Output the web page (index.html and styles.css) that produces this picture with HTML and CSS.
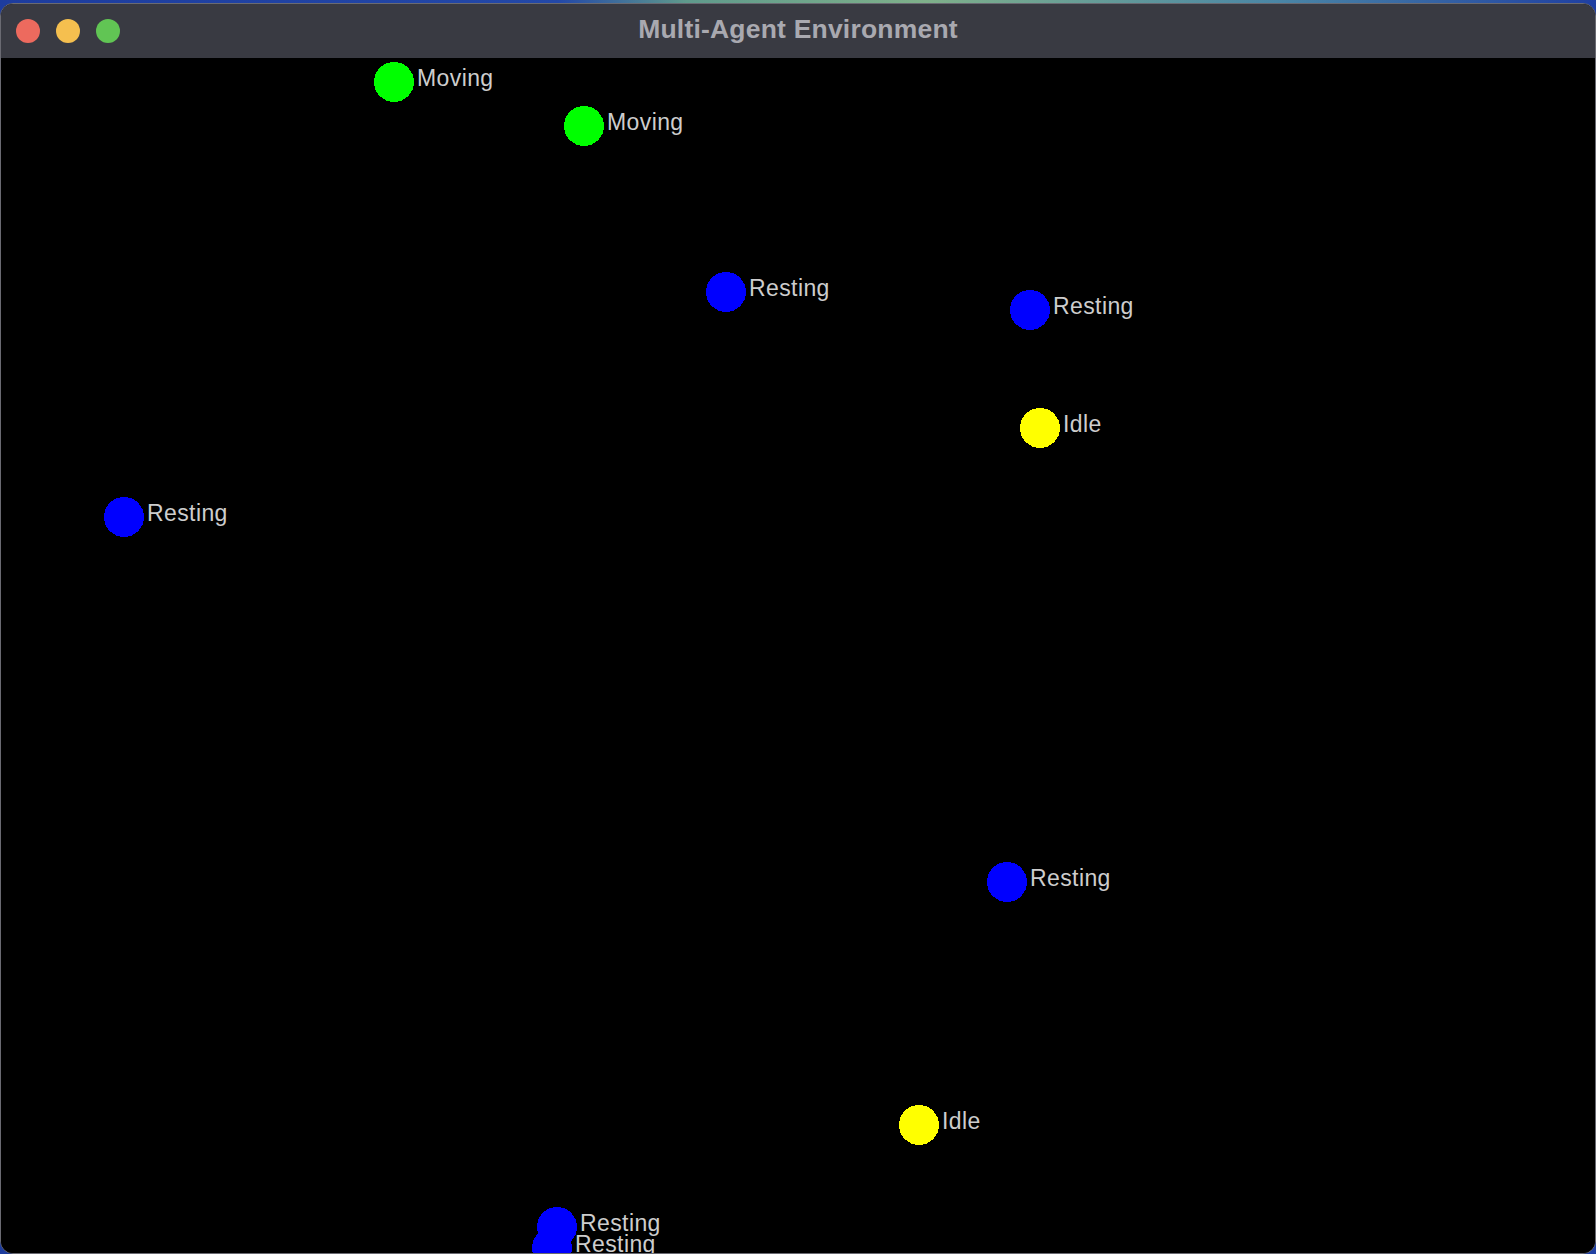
FILE: index.html
```html
<!DOCTYPE html>
<html lang="en">
<head>
<meta charset="utf-8">
<title>Multi-Agent Environment</title>
<link rel="stylesheet" href="styles.css">
</head>
<body>
<div class="window">
  <header class="titlebar">
    <div class="lights">
      <span class="light red"></span>
      <span class="light yellow"></span>
      <span class="light green"></span>
    </div>
    <div class="title">Multi-Agent Environment</div>
    <div></div>
  </header>
  <main class="canvas">
    <div class="agent moving" style="left:373px;top:4px"><svg class="dot" viewBox="0 0 40 40" shape-rendering="crispEdges"><circle cx="20" cy="20" r="20"/></svg><span class="label">Moving</span></div>
    <div class="agent moving" style="left:563px;top:48px"><svg class="dot" viewBox="0 0 40 40" shape-rendering="crispEdges"><circle cx="20" cy="20" r="20"/></svg><span class="label">Moving</span></div>
    <div class="agent resting" style="left:705px;top:214px"><svg class="dot" viewBox="0 0 40 40" shape-rendering="crispEdges"><circle cx="20" cy="20" r="20"/></svg><span class="label">Resting</span></div>
    <div class="agent resting" style="left:1009px;top:232px"><svg class="dot" viewBox="0 0 40 40" shape-rendering="crispEdges"><circle cx="20" cy="20" r="20"/></svg><span class="label">Resting</span></div>
    <div class="agent idle" style="left:1019px;top:350px"><svg class="dot" viewBox="0 0 40 40" shape-rendering="crispEdges"><circle cx="20" cy="20" r="20"/></svg><span class="label">Idle</span></div>
    <div class="agent resting" style="left:103px;top:439px"><svg class="dot" viewBox="0 0 40 40" shape-rendering="crispEdges"><circle cx="20" cy="20" r="20"/></svg><span class="label">Resting</span></div>
    <div class="agent resting" style="left:986px;top:804px"><svg class="dot" viewBox="0 0 40 40" shape-rendering="crispEdges"><circle cx="20" cy="20" r="20"/></svg><span class="label">Resting</span></div>
    <div class="agent idle" style="left:898px;top:1047px"><svg class="dot" viewBox="0 0 40 40" shape-rendering="crispEdges"><circle cx="20" cy="20" r="20"/></svg><span class="label">Idle</span></div>
    <div class="agent resting" style="left:536px;top:1149px"><svg class="dot" viewBox="0 0 40 40" shape-rendering="crispEdges"><circle cx="20" cy="20" r="20"/></svg><span class="label">Resting</span></div>
    <div class="agent resting" style="left:531px;top:1170px"><svg class="dot" viewBox="0 0 40 40" shape-rendering="crispEdges"><circle cx="20" cy="20" r="20"/></svg><span class="label">Resting</span></div>
  </main>
</div>
</body>
</html>
```

FILE: styles.css
```css
* {
  box-sizing: border-box;
}

html, body {
  margin: 0;
  height: 100%;
}

body {
  background: linear-gradient(90deg, #1d3c9e 0%, #2348a8 35%, #5f9a8c 43%, #7fb08a 58%, #4a86a6 80%, #1f3fa2 100%);
  overflow: hidden;
  font-family: "Liberation Sans", Arial, sans-serif;
}

.window {
  margin-top: 3px;
  height: 1251px;
  border: 1px solid #6a6a72;
  border-radius: 13px;
  overflow: hidden;
  display: flex;
  flex-direction: column;
  background: #000;
}

.titlebar {
  height: 54px;
  flex: none;
  background: #393a42;
  display: grid;
  grid-template-columns: 1fr auto 1fr;
  align-items: center;
}

.lights {
  display: flex;
  gap: 16px;
  padding-left: 15px;
  padding-bottom: 1px;
}

.light {
  width: 24px;
  height: 24px;
  border-radius: 50%;
  display: block;
}

.red { background: #ed6a5e; }
.yellow { background: #f5bf4f; }
.green { background: #61c554; }

.title {
  color: #a9a9b0;
  font-weight: bold;
  font-size: 26.5px;
  letter-spacing: 0.2px;
  padding-bottom: 3px;
}

.canvas {
  flex: 1;
  position: relative;
  background: #000;
  overflow: hidden;
}

.agent {
  position: absolute;
  display: flex;
  align-items: flex-start;
  gap: 3px;
}

.dot {
  width: 40px;
  height: 40px;
  display: block;
  flex: none;
}

.moving .dot circle { fill: #00ff00; }
.resting .dot circle { fill: #0000ff; }
.idle .dot circle { fill: #ffff00; }

.label {
  margin-top: 3px;
  color: #cdcdcd;
  font-size: 23px;
  line-height: 26px;
  letter-spacing: 0.4px;
  white-space: nowrap;
}
```
